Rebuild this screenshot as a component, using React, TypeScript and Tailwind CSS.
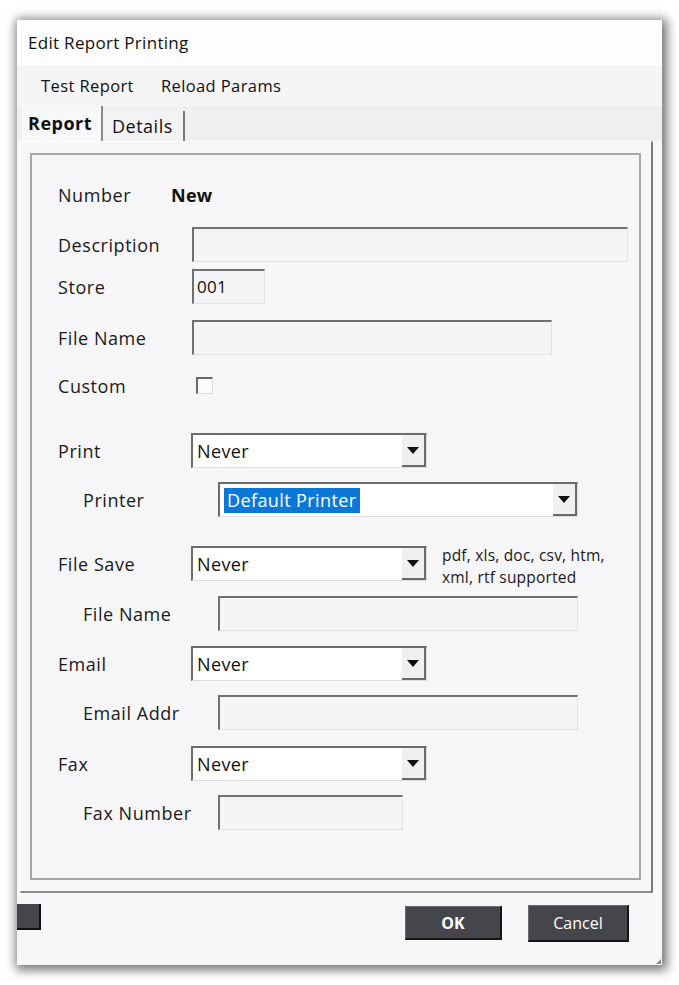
import React from 'react';

const font = { fontFamily: '"Open Sans", "Noto Sans", sans-serif' };

const Input: React.FC<{ w: string; value?: string }> = ({ w, value }) => (
    <div className={`${w} h-[35px] flex items-center pl-[3px] bg-[#f5f4f7] border-t-2 border-l-2 border-b border-r border-t-[#707070] border-l-[#707070] border-b-[#e2e2e4] border-r-[#e2e2e4] text-[17px] tracking-[0.3px] text-[#111]`}>
        {value}
    </div>
);

const Select: React.FC<{ w: string; value: string; selected?: boolean }> = ({ w, value, selected }) => (
    <div className={`${w} h-[35px] flex bg-white border-t-2 border-l-2 border-b border-r border-t-[#6b6b6b] border-l-[#6b6b6b] border-b-[#dcdcdc] border-r-[#dcdcdc]`}>
        <div className="flex-1 flex items-center pl-[4px]">
            {selected ? (
                <span className="bg-[#0a78d4] text-white text-[18px] tracking-[0.4px] leading-[25px] px-[3px]">{value}</span>
            ) : (
                <span className="text-[18px] tracking-[0.4px] text-[#111]">{value}</span>
            )}
        </div>
        <div className="w-[24px] flex items-center justify-center bg-[#f0f0f1] border-r-2 border-b-2 border-[#6b6b6b]">
            <svg width="12" height="7" viewBox="0 0 12 7"><path d="M0 0h12L6 7z" fill="#111" /></svg>
        </div>
    </div>
);

const Row: React.FC<{ label: string; sub?: boolean; mt: string; children: React.ReactNode }> = ({ label, sub, mt, children }) => (
    <div className={`flex items-center h-[35px] ${mt} ${sub ? 'pl-[51px]' : 'pl-[26px]'}`}>
        <div className={`${sub ? 'w-[135px]' : 'w-[134px]'} pt-[2px] text-[18px] tracking-[0.55px] text-[#1a1a1a] shrink-0`}>{label}</div>
        {children}
    </div>
);

export default function App() {
    return (
        <div className="min-h-[985px] w-[679px] bg-white pt-[20px] pl-[17px]" style={font}>
            <div className="w-[645px] h-[945px] flex flex-col bg-[#f7f6f8] shadow-[2px_2px_10px_3px_rgba(0,0,0,0.55)] relative">
                {/* title */}
                <div className="h-[46px] flex items-center pl-[11px] bg-[#fdfdfd] text-[17px] tracking-[0.3px] text-[#111]">Edit Report Printing</div>
                {/* menu */}
                <div className="h-[40px] flex items-center gap-[27px] pl-[24px] bg-[#f5f4f7] text-[16.5px] tracking-[0.4px] text-[#111]">
                    <span>Test Report</span>
                    <span>Reload Params</span>
                </div>
                {/* tabs */}
                <div className="h-[35px] flex items-end pl-[5px] bg-[#efeef1]">
                    <div className="h-[35px] w-[81px] flex items-center pl-[6px] bg-[#f8f7f9] text-[18px] tracking-[0.5px] font-bold text-[#111] border-r-2 border-[#8a8a8a]">Report</div>
                    <div className="h-[30px] w-[82px] flex items-center pl-[9px] bg-[#f3f2f5] text-[18px] tracking-[0.5px] text-[#111] border-r-2 border-[#7a7a7a]">Details</div>
                </div>
                {/* panel */}
                <div className="ml-[3px] w-[633px] h-[752px] bg-[#f6f5f8] border-t border-l border-t-white border-l-white border-r-2 border-b-2 border-r-[#7a7a7a] border-b-[#8a8a8a] pt-[11px] pl-[9px]">
                    <div className="w-[611px] h-[727px] border-2 border-[#a6a6a8] pt-[22px]">
                        <div className="flex items-center h-[35px] pl-[26px] pt-[2px]">
                            <div className="w-[113px] text-[18px] tracking-[0.55px] text-[#1a1a1a]">Number</div>
                            <div className="text-[18px] tracking-[0.3px] font-bold text-[#111]">New</div>
                        </div>
                        <Row label="Description" mt="mt-[15px]"><Input w="w-[436px]" /></Row>
                        <Row label="Store" mt="mt-[7px]"><Input w="w-[73px]" value="001" /></Row>
                        <Row label="File Name" mt="mt-[16px]"><Input w="w-[360px]" /></Row>
                        <Row label="Custom" mt="mt-[13px]">
                            <div className="ml-[4px] w-[17px] h-[17px] bg-[#fbfbfc] border-t-2 border-l-2 border-b border-r border-t-[#6a6a6a] border-l-[#6a6a6a] border-b-[#dddddd] border-r-[#dddddd]" />
                        </Row>
                        <Row label="Print" mt="mt-[30px]"><div className="-ml-px"><Select w="w-[236px]" value="Never" /></div></Row>
                        <Row label="Printer" sub mt="mt-[14px]"><Select w="w-[360px]" value="Default Printer" selected /></Row>
                        <Row label="File Save" mt="mt-[29px]">
                            <div className="-ml-px"><Select w="w-[236px]" value="Never" /></div>
                            <div className="ml-[15px] text-[15.5px] tracking-[0.2px] leading-[22px] text-[#1a1a1a] mt-[4px]">
                                pdf, xls, doc, csv, htm,<br />xml, rtf supported
                            </div>
                        </Row>
                        <Row label="File Name" sub mt="mt-[15px]"><Input w="w-[360px]" /></Row>
                        <Row label="Email" mt="mt-[15px]"><div className="-ml-px"><Select w="w-[236px]" value="Never" /></div></Row>
                        <Row label="Email Addr" sub mt="mt-[14px]"><Input w="w-[360px]" /></Row>
                        <Row label="Fax" mt="mt-[16px]"><div className="-ml-px"><Select w="w-[236px]" value="Never" /></div></Row>
                        <Row label="Fax Number" sub mt="mt-[14px]"><Input w="w-[185px]" /></Row>
                    </div>
                </div>
                {/* buttons */}
                <div className="flex-1 flex items-start pt-[11px] pr-[33px]">
                    <div className="w-[24px] h-[26px] bg-[#45464c] border-r-2 border-b-2 border-[#111]" />
                    <div className="flex-1" />
                    <button className="mt-[2px] w-[97px] h-[34px] bg-[#45464c] text-white text-[16px] font-bold border-r-2 border-b-2 border-[#151515] border-t border-l border-t-[#6a6a70] border-l-[#6a6a70]">OK</button>
                    <button className="ml-[26px] mt-[1px] w-[101px] h-[37px] bg-[#45464c] text-white text-[16px] border-r-2 border-b-2 border-[#151515] border-t border-l border-t-[#6a6a70] border-l-[#6a6a70]">Cancel</button>
                </div>
                <svg className="absolute right-[1px] bottom-[1px]" width="5" height="5" viewBox="0 0 5 5"><path d="M5 0L0 5h5z" fill="#888" /></svg>
            </div>
        </div>
    );
}
